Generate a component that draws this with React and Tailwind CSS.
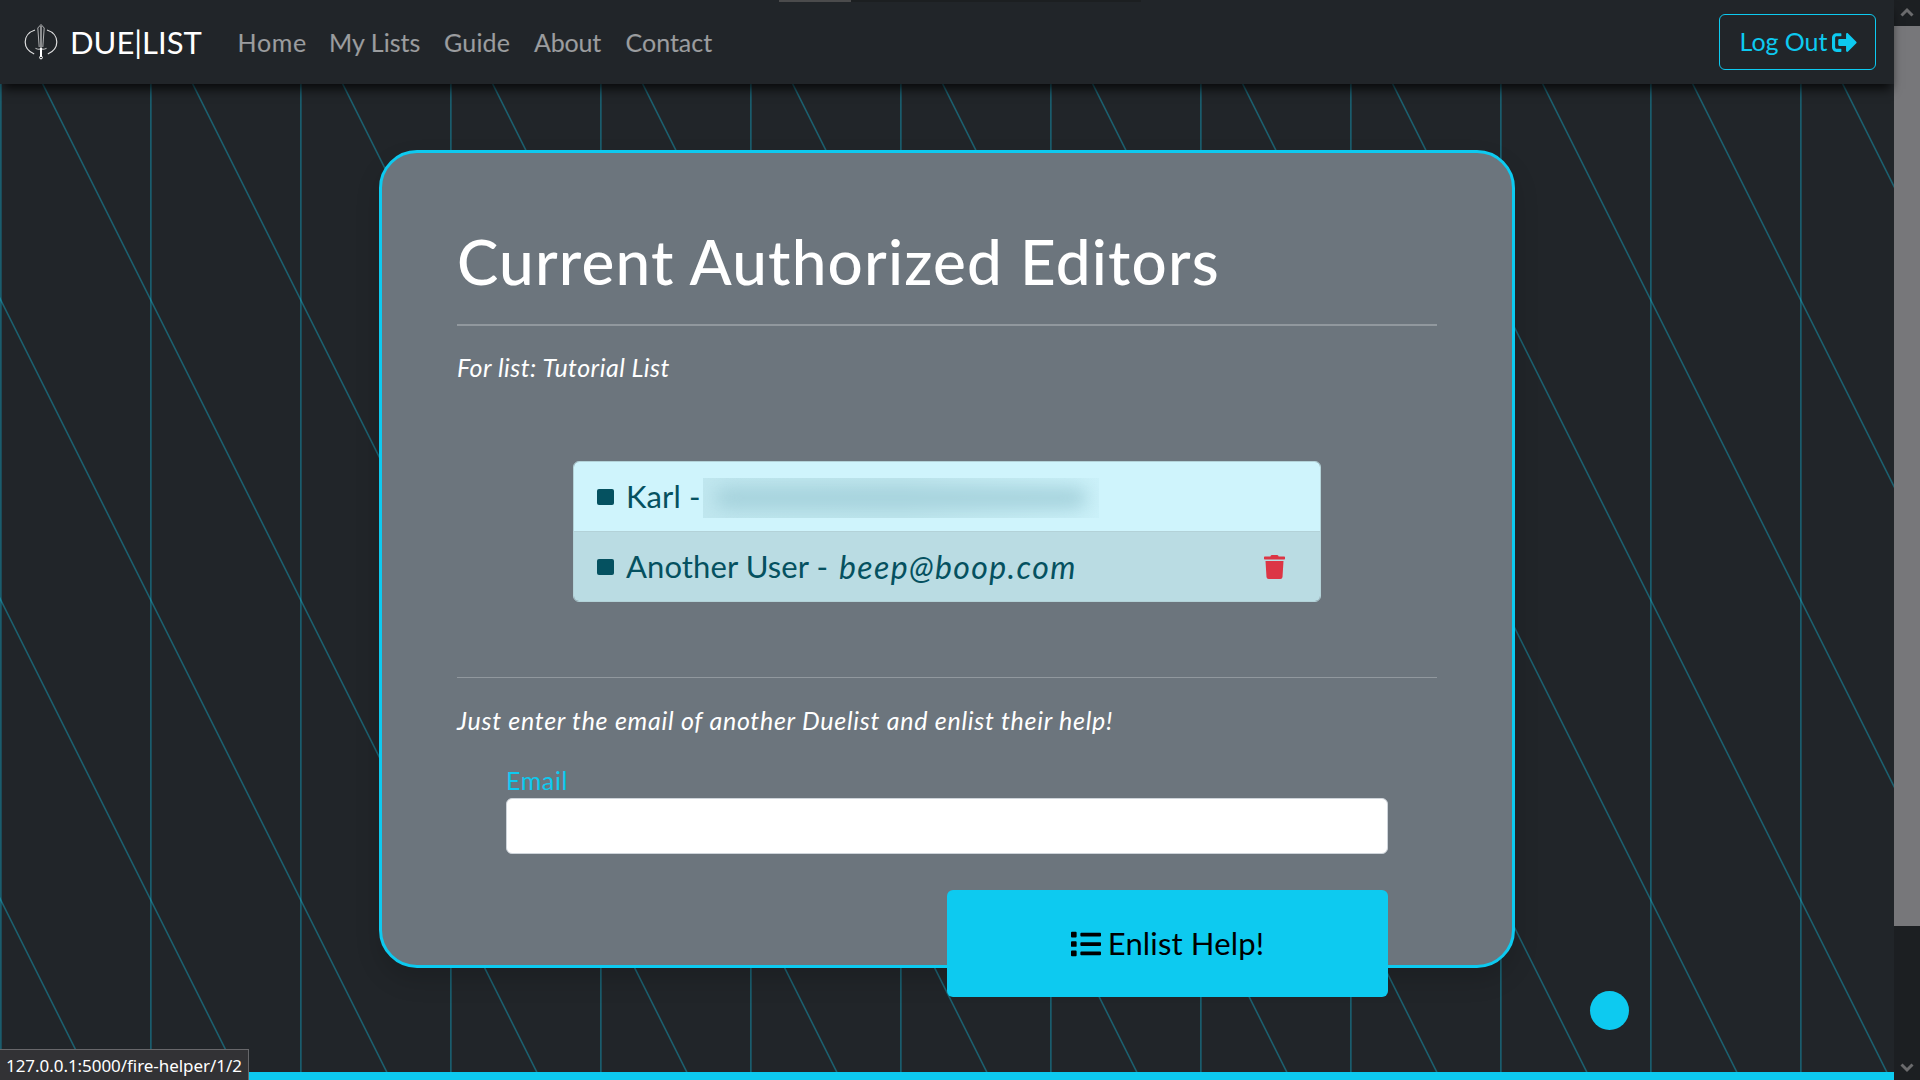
import { FaList, FaSignOutAlt, FaTrash } from "react-icons/fa";

const NAV = [
  { label: "Home", width: "w-[91.5px]", tracking: "tracking-[0.7px]" },
  { label: "My Lists", width: "w-[115px]", tracking: "tracking-[0.05px]" },
  { label: "Guide", width: "w-[90px]", tracking: "tracking-[0.2px]" },
  { label: "About", width: "w-[91.5px]", tracking: "tracking-[-0.2px]" },
  { label: "Contact", width: "w-[110px]", tracking: "tracking-[0px]" },
];

function Backdrop() {
  return (
    <svg className="absolute inset-0 h-full w-full" aria-hidden="true">
      <defs>
        <pattern id="rays" width="150" height="300" patternUnits="userSpaceOnUse">
          <path d="M0.85 0V300" fill="none" stroke="#0dcaf0" strokeOpacity="0.34" strokeWidth="1.7" />
          <path d="M-1 -3.500L151 300.500M-151 -3.500L1 300.500" fill="none" stroke="#0dcaf0" strokeOpacity="0.36" strokeWidth="1.5" />
        </pattern>
      </defs>
      <rect width="100%" height="100%" fill="url(#rays)" />
    </svg>
  );
}

function Logo() {
  return (
    <svg width="34" height="36" viewBox="0 0 34 36" fill="none" stroke="#fff" className="shrink-0">
      <path d="M11 6C4.500 8 1.200 13 1.200 18s3.300 9.500 9 12" strokeWidth="1.200" strokeOpacity=".85" />
      <path d="M23 6c6.500 2 9.800 7 9.800 12s-3.300 9.500-9 12" strokeWidth="1.200" strokeOpacity=".85" />
      <path d="M17 .5L13.800 4l1.400 19M17 .5L20.200 4l-1.400 19" strokeWidth="1" strokeOpacity=".65" />
      <path d="M17 2v22" strokeWidth="1.200" strokeOpacity=".8" />
      <path d="M11.500 24c1.500 2 3.500 1 5.500 1s4 1 5.500-1" strokeWidth="1.100" strokeOpacity=".7" />
      <path d="M17 24v9" strokeWidth="2" />
      <circle cx="17" cy="33.500" r="1.400" strokeWidth="1" />
    </svg>
  );
}

function Navbar() {
  return (
    <nav className="relative z-10 flex h-[84px] items-center bg-[#212529] pl-6 pr-[18px] shadow-[0_8px_10px_-3px_rgba(0,0,0,0.75)]">
      <Logo />
      <span className="ml-3 w-[167.500px] whitespace-nowrap text-[31px] leading-[45px] text-white">DUE|LIST</span>
      <ul className="flex text-[25px] leading-9 text-white/55">
        {NAV.map((item) => (
          <li key={item.label} className={`${item.width} ${item.tracking} whitespace-nowrap`}>{item.label}</li>
        ))}
      </ul>
      <button className="ml-auto flex h-14 w-[157px] items-center rounded-md border border-[#0dcaf0] pl-[15px] text-[25px] text-[#0dcaf0]">
        <span className="w-[97px] whitespace-nowrap tracking-[-0.05px]">Log Out</span>
        <FaSignOutAlt className="h-[25px] w-[25px]" />
      </button>
    </nav>
  );
}

function Square() {
  return <span className="mr-3 h-4 w-[17px] shrink-0 rounded-[2px] bg-[#055160]" />;
}

function Editors() {
  return (
    <ul className="ml-[116px] mt-[76px] w-[748px] overflow-hidden rounded-md border border-[#b3d2d8] text-[31px] leading-[45px] text-[#055160]">
      <li className="flex h-[69px] items-center bg-[#cff4fc] pl-[23px]">
        <Square />
        <span className="w-[77px] whitespace-nowrap tracking-[0.1px]">Karl -</span>
        <span className="mt-0.5 flex h-10 w-[396px] items-center overflow-hidden bg-linear-to-r from-[#c0e7ef] via-[#bee5ed] to-[#cbf1f9] px-3">
          <span className="h-5 w-full rounded-full bg-[#a3d0da] blur-[9px]" />
        </span>
      </li>
      <li className="flex h-[70px] items-center border-t border-[#b3d2d8] bg-[#badce3] pl-[23px] pr-[34px]">
        <Square />
        <span className="w-[213px] whitespace-nowrap tracking-[0.1px]">Another User -</span>
        <em className="text-[32px] tracking-[1.4px]">beep@boop.com</em>
        <FaTrash className="ml-auto h-6 w-[23px] text-[#dc3545]" />
      </li>
    </ul>
  );
}

function Card() {
  return (
    <section className="relative ml-[379px] mt-[66px] h-[818px] w-[1136px] rounded-[38px] border-[3px] border-[#0dcaf0] bg-[#6c757d] px-[75px] pt-[72px] text-white shadow-[0_12px_24px_rgba(0,0,0,0.15)]">
      <h1 className="whitespace-nowrap text-[62px] font-medium leading-[72px] tracking-[1.200px]">Current Authorized Editors</h1>
      <hr className="mt-[27px] border-t-2 border-[#91989e]" />
      <p className="mt-[23px] text-[25px] italic leading-9 tracking-[0.48px]">For list: Tutorial List</p>
      <Editors />
      <hr className="mt-[75px] border-[#91989e]" />
      <p className="mt-6 text-[25px] italic leading-9 tracking-[0.73px]">Just enter the email of another Duelist and enlist their help!</p>
      <form className="mx-[49px] mt-6 flex flex-col">
        <label className="text-[25px] leading-9 tracking-[0.6px] text-[#0dcaf0]">Email</label>
        <input className="h-14 rounded-md border border-[#ced4da] bg-white" />
        <button type="button" className="mt-9 flex h-[107px] w-[441px] items-center justify-center gap-[7px] self-end rounded-md bg-[#0dcaf0] text-[31px] tracking-[0.15px] text-black">
          <FaList className="h-[30px] w-[30px]" />
          <span>Enlist Help!</span>
        </button>
      </form>
    </section>
  );
}

function Scrollbar() {
  return (
    <div className="flex w-[26px] flex-col items-center justify-between bg-[#1c1f22]">
      <svg width="26" height="26" viewBox="0 0 26 26" fill="none" stroke="#6b6b6d" strokeWidth="3">
        <path d="M7.500 15.500L13 10l5.500 5.500" />
      </svg>
      <div className="mb-auto h-[900px] w-full bg-[#77777a]" />
      <svg width="26" height="26" viewBox="0 0 26 26" fill="none" stroke="#6b6b6d" strokeWidth="3">
        <path d="M7.500 10.500L13 16l5.500-5.500" />
      </svg>
    </div>
  );
}

export default function App() {
  return (
    <div className="flex h-[1080px] w-[1920px] overflow-hidden bg-[#212529] font-['Lato',sans-serif]">
      <div className="relative flex w-[1894px] flex-col">
        <Backdrop />
        <Navbar />
        <Card />
        <footer className="relative mt-auto h-2 bg-[#0dcaf0]" />
        <div className="absolute left-[1589.500px] top-[990.500px] h-[39px] w-[39px] rounded-full bg-[#0dcaf0]" />
        <div className="absolute left-[779px] top-0 z-20 flex h-0.5 w-[362px] bg-[#1c1f21]">
          <div className="w-[72px] bg-[#4b4b4c]" />
        </div>
        <div className="absolute bottom-0 left-0 z-20 flex h-[31px] w-[249px] items-center whitespace-nowrap border-r border-t border-[#67676a] bg-[#323235] pl-[6px] pt-px font-['Noto_Sans',sans-serif] text-[17px] tracking-[-0.05px] text-white">
          127.0.0.1:5000/fire-helper/1/2
        </div>
      </div>
      <Scrollbar />
    </div>
  );
}
